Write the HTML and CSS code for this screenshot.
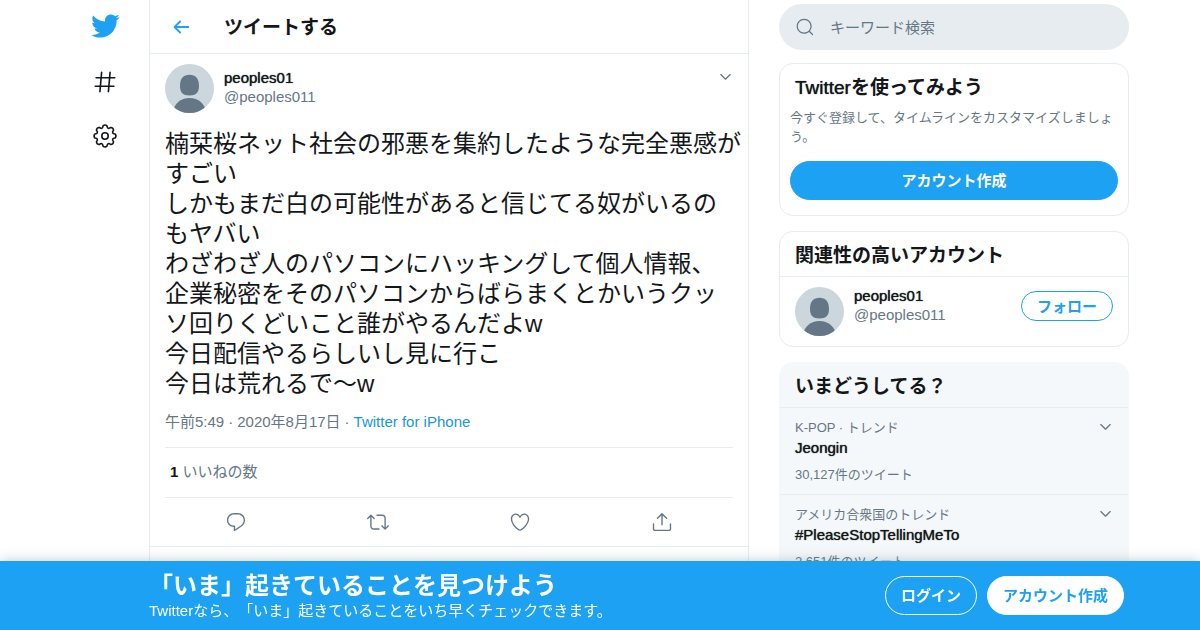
FILE: index.html
```html
<!DOCTYPE html>
<html lang="ja">
<head>
    <meta charset="UTF-8">
    <meta name="viewport" content="width=device-width, initial-scale=1.0">
    <title>ツイートする</title>
    <link rel="stylesheet" href="styles.css">
</head>
<body>
    <svg class="symbols" aria-hidden="true">
        <symbol id="avatar" viewBox="0 0 49 49">
            <clipPath id="round"><circle cx="24.5" cy="24.5" r="24.5"/></clipPath>
            <g clip-path="url(#round)">
                <rect width="49" height="49" fill="#ccd6dd"/>
                <path fill="#657786" d="M24.5 10.800c6 0 9.500 3.800 9.500 11 0 7-3 9.700-9.500 9.700S15 28.800 15 21.800c0-7.200 3.500-11 9.500-11z"/>
                <ellipse cx="24.5" cy="48" rx="16" ry="14" fill="#657786"/>
            </g>
        </symbol>
        <symbol id="chevron" viewBox="0 0 24 24">
            <path d="M20.207 8.147c-.39-.39-1.023-.39-1.414 0L12 14.94 5.207 8.147c-.39-.39-1.023-.39-1.414 0-.39.39-.39 1.023 0 1.414l7.5 7.5c.195.196.45.294.707.294s.512-.098.707-.293l7.5-7.5c.39-.39.39-1.022 0-1.413z"/>
        </symbol>
    </svg>

    <div class="page">
        <nav class="rail">
            <a href="#" class="logo" aria-label="Twitter">
                <svg viewBox="0 0 24 24"><path d="M23.643 4.937c-.835.37-1.732.62-2.675.733.962-.576 1.7-1.49 2.048-2.578-.9.534-1.897.922-2.958 1.13-.85-.904-2.06-1.47-3.4-1.47-2.572 0-4.658 2.086-4.658 4.66 0 .364.042.718.12 1.06-3.873-.195-7.304-2.05-9.602-4.868-.4.69-.63 1.49-.63 2.342 0 1.616.823 3.043 2.072 3.878-.764-.025-1.482-.234-2.11-.583v.06c0 2.257 1.605 4.14 3.737 4.568-.392.106-.803.162-1.227.162-.3 0-.593-.028-.877-.082.593 1.85 2.313 3.198 4.352 3.234-1.595 1.25-3.604 1.995-5.786 1.995-.376 0-.747-.022-1.112-.065 2.062 1.323 4.51 2.093 7.14 2.093 8.57 0 13.255-7.098 13.255-13.254 0-.2-.005-.402-.014-.602.91-.658 1.7-1.477 2.323-2.41z"/></svg>
            </a>
            <a href="#" aria-label="話題を検索">
                <svg viewBox="0 0 24 24"><path d="M21 7.337h-3.93l.372-4.272c.036-.412-.27-.775-.682-.812-.417-.03-.776.27-.812.683l-.383 4.4h-6.32l.37-4.27c.037-.413-.27-.776-.68-.813-.42-.03-.777.27-.813.683l-.382 4.4H3.782c-.414 0-.75.337-.75.75s.336.75.75.75H7.61l-.55 6.327H3c-.414 0-.75.336-.75.75s.336.75.75.75h3.93l-.372 4.272c-.036.412.27.775.682.812l.066.003c.385 0 .712-.295.746-.686l.383-4.4h6.32l-.37 4.27c-.036.413.27.776.682.813l.066.003c.385 0 .712-.295.746-.686l.382-4.4h3.957c.413 0 .75-.337.75-.75s-.337-.75-.75-.75H16.39l.55-6.327H21c.414 0 .75-.336.75-.75s-.336-.75-.75-.75zm-6.115 7.826h-6.32l.55-6.326h6.32l-.55 6.326z"/></svg>
            </a>
            <a href="#" aria-label="設定">
                <svg viewBox="-13 -13 26 26" class="gear">
                    <path d="M1.97 10.11Q2.49 6 5.76 8.54A3 3 0 0 0 8.54 5.76Q6 2.49 10.11 1.97A3 3 0 0 0 10.11-1.97Q6-2.49 8.54-5.76A3 3 0 0 0 5.76-8.54Q2.49-6 1.97-10.11A3 3 0 0 0-1.97-10.11Q-2.49-6-5.76-8.54A3 3 0 0 0-8.54-5.76Q-6-2.49-10.11-1.97A3 3 0 0 0-10.11 1.97Q-6 2.49-8.54 5.76A3 3 0 0 0-5.76 8.54Q-2.49 6-1.97 10.11A3 3 0 0 0 1.97 10.11z"/>
                    <circle r="3.2"/>
                </svg>
            </a>
        </nav>

        <main class="column">
            <header class="column-header">
                <a href="#" class="back" aria-label="戻る">
                    <svg viewBox="0 0 24 24"><path d="M20 11H7.414l4.293-4.293c.39-.39.39-1.023 0-1.414s-1.023-.39-1.414 0l-6 6c-.39.39-.39 1.023 0 1.414l6 6c.195.195.45.293.707.293s.512-.098.707-.293c.39-.39.39-1.023 0-1.414L7.414 13H20c.553 0 1-.447 1-1s-.447-1-1-1z"/></svg>
                </a>
                <h1>ツイートする</h1>
            </header>

            <article class="tweet">
                <div class="user">
                    <svg class="avatar"><use href="#avatar"/></svg>
                    <div class="names">
                        <a href="#" class="name">peoples01</a>
                        <span class="handle">@peoples011</span>
                    </div>
                    <button class="more" aria-label="もっと見る"><svg><use href="#chevron"/></svg></button>
                </div>
                <p class="tweet-text">楠栞桜ネット社会の邪悪を集約したような完全悪感が
すごい
しかもまだ白の可能性があると信じてる奴がいるの
もヤバい
わざわざ人のパソコンにハッキングして個人情報、
企業秘密をそのパソコンからばらまくとかいうクッ
ソ回りくどいこと誰がやるんだよw
今日配信やるらしいし見に行こ
今日は荒れるで〜w</p>
                <div class="meta">
                    <span>午前5:49</span><span>·</span><span>2020年8月17日</span><span>·</span><a href="#">Twitter for iPhone</a>
                </div>
                <div class="stats"><strong>1</strong> いいねの数</div>
                <div class="actions">
                    <button aria-label="返信"><svg viewBox="0 0 24 24"><path d="M14.046 2.242l-4.148-.01h-.002c-4.374 0-7.8 3.427-7.8 7.802 0 4.098 3.186 7.206 7.465 7.37v3.828c0 .108.044.286.12.403.142.225.384.347.632.347.138 0 .277-.038.402-.118.264-.168 6.473-4.14 8.088-5.506 1.902-1.61 3.04-3.97 3.043-6.312v-.017c-.006-4.367-3.43-7.787-7.8-7.788zm3.787 12.972c-1.134.96-4.862 3.405-6.772 4.643V16.67c0-.414-.335-.75-.75-.75h-.396c-3.66 0-6.318-2.476-6.318-5.886 0-3.534 2.768-6.302 6.3-6.302l4.147.01h.002c3.532 0 6.3 2.766 6.302 6.296-.003 1.91-.942 3.844-2.514 5.176z"/></svg></button>
                    <button aria-label="リツイート"><svg viewBox="0 0 24 24"><path d="M23.77 15.67c-.292-.293-.767-.293-1.06 0l-2.22 2.22V7.65c0-2.068-1.683-3.75-3.75-3.75h-5.85c-.414 0-.75.336-.75.75s.336.75.75.75h5.85c1.24 0 2.25 1.01 2.25 2.25v10.24l-2.22-2.22c-.293-.293-.768-.293-1.06 0s-.294.768 0 1.06l3.5 3.5c.145.147.337.22.53.22s.383-.072.53-.22l3.5-3.5c.294-.292.294-.767 0-1.06zm-10.66 3.28H7.26c-1.24 0-2.25-1.01-2.25-2.25V6.46l2.22 2.22c.148.147.34.22.532.22s.384-.073.53-.22c.293-.293.293-.768 0-1.06l-3.5-3.5c-.293-.294-.768-.294-1.06 0l-3.5 3.5c-.294.292-.294.767 0 1.06s.767.293 1.06 0l2.22-2.22V16.7c0 2.068 1.683 3.75 3.75 3.75h5.85c.414 0 .75-.336.75-.75s-.337-.75-.75-.75z"/></svg></button>
                    <button aria-label="いいね"><svg viewBox="0 0 24 24"><path d="M12 21.638h-.014C9.403 21.59 1.95 14.856 1.95 8.478c0-3.064 2.525-5.754 5.403-5.754 2.29 0 3.83 1.58 4.646 2.73.814-1.148 2.354-2.73 4.645-2.73 2.88 0 5.404 2.69 5.404 5.755 0 6.376-7.454 13.11-10.037 13.157H12zM7.354 4.225c-2.08 0-3.903 1.988-3.903 4.255 0 5.74 7.034 11.596 8.55 11.658 1.518-.062 8.55-5.917 8.55-11.658 0-2.267-1.823-4.255-3.903-4.255-2.528 0-3.94 2.936-3.952 2.965-.23.562-1.156.562-1.387 0-.014-.03-1.425-2.965-3.954-2.965z"/></svg></button>
                    <button aria-label="共有"><svg viewBox="0 0 24 24"><path d="M17.53 7.47l-5-5c-.293-.293-.768-.293-1.06 0l-5 5c-.294.293-.294.768 0 1.06s.767.294 1.06 0l3.72-3.72V15c0 .414.336.75.75.75s.75-.336.75-.75V4.81l3.72 3.72c.146.147.338.22.53.22s.384-.072.53-.22c.293-.293.293-.767 0-1.06z"/><path d="M19.708 21.944H4.292C3.028 21.944 2 20.916 2 19.652V14c0-.414.336-.75.75-.75s.75.336.75.75v5.652c0 .437.355.792.792.792h15.416c.437 0 .792-.355.792-.792V14c0-.414.336-.75.75-.75s.75.336.75.75v5.652c0 1.264-1.028 2.292-2.292 2.292z"/></svg></button>
                </div>
            </article>
        </main>

        <aside class="sidebar">
            <form class="search">
                <label for="search" aria-label="キーワード検索">
                    <svg viewBox="0 0 24 24"><path d="M21.53 20.47l-3.66-3.66C19.195 15.24 20 13.214 20 11c0-4.97-4.03-9-9-9s-9 4.03-9 9 4.03 9 9 9c2.215 0 4.24-.804 5.808-2.13l3.66 3.66c.147.146.34.22.53.22s.385-.073.53-.22c.295-.293.295-.767.002-1.06zM3.5 11c0-4.135 3.365-7.5 7.5-7.5s7.5 3.365 7.5 7.5-3.365 7.5-7.5 7.5-7.5-3.365-7.5-7.5z"/></svg>
                </label>
                <input type="text" id="search" placeholder="キーワード検索">
            </form>

            <section class="card signup">
                <h2><span class="latin">Twitter</span>を使ってみよう</h2>
                <p>今すぐ登録して、タイムラインをカスタマイズしましょう。</p>
                <button class="btn btn-primary">アカウント作成</button>
            </section>

            <section class="card">
                <h2>関連性の高いアカウント</h2>
                <div class="user item">
                    <svg class="avatar"><use href="#avatar"/></svg>
                    <div class="names">
                        <a href="#" class="name">peoples01</a>
                        <span class="handle">@peoples011</span>
                    </div>
                    <button class="btn btn-follow">フォロー</button>
                </div>
            </section>

            <section class="card trends">
                <h2>いまどうしてる？</h2>
                <div class="item trend">
                    <div class="trend-body">
                        <div class="small">K-POP · トレンド</div>
                        <a href="#" class="name">Jeongin</a>
                        <div class="small count">30,127件のツイート</div>
                    </div>
                    <button class="more" aria-label="もっと見る"><svg><use href="#chevron"/></svg></button>
                </div>
                <div class="item trend">
                    <div class="trend-body">
                        <div class="small">アメリカ合衆国のトレンド</div>
                        <a href="#" class="name">#PleaseStopTellingMeTo</a>
                        <div class="small count">2,651件のツイート</div>
                    </div>
                    <button class="more" aria-label="もっと見る"><svg><use href="#chevron"/></svg></button>
                </div>
            </section>
        </aside>
    </div>

    <div class="bottom-bar">
        <div class="bottom-inner">
            <div class="pitch">
                <div class="pitch-title">「いま」起きていることを見つけよう</div>
                <div>Twitterなら、「いま」起きていることをいち早くチェックできます。</div>
            </div>
            <button class="btn btn-outline">ログイン</button>
            <button class="btn btn-white">アカウント作成</button>
        </div>
    </div>
</body>
</html>
```

FILE: styles.css
```css
* {
    box-sizing: border-box;
}
body {
    margin: 0;
    background-color: #fff;
    color: #14171a;
    font-family: "Liberation Sans", "Noto Sans CJK JP", sans-serif;
    font-size: 15px;
    line-height: 19px;
    text-spacing-trim: space-all;
}
h1, h2, p {
    margin: 0;
}
a {
    color: inherit;
    text-decoration: none;
}
svg {
    display: block;
    fill: currentColor;
}
button, input {
    font-family: inherit;
    font-size: 15px;
    padding: 0;
    border: none;
    background: none;
}
button {
    cursor: pointer;
}
.symbols {
    position: absolute;
    width: 0;
    height: 0;
}

.page {
    display: grid;
    grid-template-columns: 88px minmax(0, 600px) 350px;
    max-width: 1078px;
    margin: 0 auto;
}

/* left rail */
.rail {
    display: flex;
    flex-direction: column;
    align-items: center;
    gap: 28px;
    padding-top: 11px;
}
.rail svg {
    width: 26px;
    height: 26px;
}
.rail .logo {
    color: #1da1f2;
}
.rail .logo svg {
    width: 30px;
    height: 30px;
}
.rail .gear {
    fill: none;
    stroke: currentColor;
    stroke-width: 1.6;
    stroke-linejoin: round;
}

/* tweet column */
.column {
    min-height: 100vh;
    border: solid #e6ecf0;
    border-width: 0 1px;
}
.column-header {
    display: flex;
    align-items: center;
    gap: 32px;
    height: 54px;
    padding: 0 20px;
    border-bottom: 1px solid #e6ecf0;
}
.back {
    color: #1da1f2;
}
.back svg {
    width: 22px;
    height: 22px;
}
h1, h2 {
    font-size: 19px;
    line-height: 24px;
    font-weight: bold;
}
h1 {
    padding-top: 2px;
}
.tweet {
    padding: 10px 15px 0;
    border-bottom: 1px solid #e6ecf0;
}
.user {
    display: flex;
    align-items: flex-start;
    gap: 10px;
}
.avatar {
    width: 49px;
    height: 49px;
}
.names {
    flex: 1;
    display: flex;
    flex-direction: column;
}
.tweet .names {
    padding-top: 4px;
}
.card .names {
    margin-top: -1px;
}
.name, .latin {
    font-weight: normal;
    text-shadow: 0 0 1px #14171a;
}
.handle, .small, .meta, .stats {
    color: #657786;
}
.more {
    color: #657786;
}
.more svg {
    width: 15px;
    height: 15px;
}
.tweet .more {
    padding-top: 5px;
}
.tweet-text {
    margin-top: 16px;
    font-size: 24px;
    line-height: 30px;
    white-space: pre;
}
.meta {
    display: flex;
    gap: 4px;
    padding: 13px 0 16px;
}
.meta a {
    color: #1b95e0;
}
.stats {
    padding: 14px 5px 16px;
    border: solid #e6ecf0;
    border-width: 1px 0;
}
.stats strong {
    color: #14171a;
}
.actions {
    display: flex;
    justify-content: space-around;
    align-items: center;
    height: 48px;
    color: #657786;
}
.actions button {
    color: inherit;
}
.actions svg {
    width: 22px;
    height: 22px;
}

/* right column */
.sidebar {
    margin-left: 30px;
    width: 350px;
    padding-top: 4px;
}
.search {
    display: flex;
    align-items: center;
    gap: 15px;
    height: 46px;
    margin-bottom: 13px;
    padding: 0 16px;
    border-radius: 23px;
    background-color: #e6ecf0;
    color: #657786;
}
.search svg {
    width: 20px;
    height: 20px;
}
.search input {
    flex: 1;
    min-width: 0;
    outline: none;
    color: #14171a;
}
.search input::placeholder {
    color: #657786;
}
.card {
    margin-bottom: 15px;
    border: 1px solid #e6ecf0;
    border-radius: 14px;
}
.card h2 {
    padding: 12px 15px 8px;
}
.item {
    padding: 10px 15px;
    border-top: 1px solid #e6ecf0;
}
.signup {
    padding-bottom: 15px;
}
.signup p {
    padding: 0 10px 15px;
    color: #657786;
    font-size: 13px;
}
.btn {
    height: 39px;
    padding: 0 15px 2px;
    border: 1px solid #1da1f2;
    border-radius: 20px;
    font-weight: bold;
}
.btn-primary {
    display: block;
    width: calc(100% - 20px);
    margin: 0 auto;
    background-color: #1da1f2;
    color: #fff;
}
.btn-follow {
    height: 30px;
    margin-top: 4px;
    color: #1da1f2;
}
.trends {
    margin-bottom: 0;
    border-color: #f5f8fa;
    background-color: #f5f8fa;
}
.trend {
    display: flex;
    align-items: flex-start;
}
.trend-body {
    flex: 1;
}
.trend .name {
    display: block;
    margin-top: 1px;
}
.trend .more {
    padding-top: 1px;
}
.small {
    font-size: 13px;
}
.count {
    margin-top: 8px;
}

/* fixed login bar */
.bottom-bar {
    position: fixed;
    left: 0;
    right: 0;
    bottom: 0;
    background-color: #1da1f2;
    color: #fff;
    box-shadow: 0 0 12px rgba(101, 119, 134, 0.4);
}
.bottom-inner {
    display: flex;
    align-items: center;
    gap: 10px;
    height: 69px;
    max-width: 1078px;
    margin: 0 auto;
    padding: 0 15px 0 88px;
}
.pitch {
    flex: 1;
    white-space: nowrap;
}
.pitch-title {
    font-size: 24px;
    line-height: 30px;
    font-weight: bold;
}
.btn-outline {
    border-color: #fff;
    color: #fff;
}
.btn-white {
    border-color: #fff;
    background-color: #fff;
    color: #1da1f2;
}
```
